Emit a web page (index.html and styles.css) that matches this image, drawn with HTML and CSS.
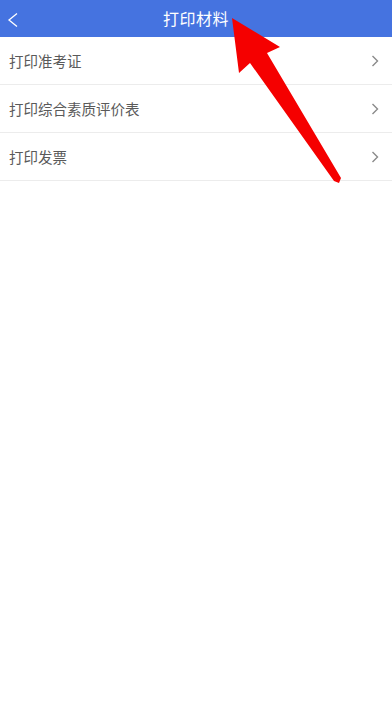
FILE: index.html
```html
<!DOCTYPE html>
<html lang="zh">
<head>
<meta charset="utf-8">
<link rel="stylesheet" href="styles.css">
</head>
<body>
<div class="page">
  <header class="bar">
    <svg class="back" width="14" height="16" viewBox="0 0 14 16"><path d="M11 1.5 L3 8 L11 14.5" fill="none" stroke="#fff" stroke-width="1.3"/></svg>
    <h1 class="title">打印材料</h1>
  </header>
  <ul class="list">
    <li class="row"><span>打印准考证</span><svg class="chev" width="8" height="12" viewBox="0 0 8 12"><path d="M1.5 1 L6.5 6 L1.5 11" fill="none" stroke="#8a8a8a" stroke-width="1.4"/></svg></li>
    <li class="row"><span>打印综合素质评价表</span><svg class="chev" width="8" height="12" viewBox="0 0 8 12"><path d="M1.5 1 L6.5 6 L1.5 11" fill="none" stroke="#8a8a8a" stroke-width="1.4"/></svg></li>
    <li class="row"><span>打印发票</span><svg class="chev" width="8" height="12" viewBox="0 0 8 12"><path d="M1.5 1 L6.5 6 L1.5 11" fill="none" stroke="#8a8a8a" stroke-width="1.4"/></svg></li>
  </ul>
  <svg class="arrow" width="392" height="702" viewBox="0 0 392 702"><polygon points="232,18 280,47 267,53 341,178 339,183 334,181 250,63 239,73" fill="#f50000"/></svg>
</div>
</body>
</html>
```
FILE: styles.css
```css
html, body {
  margin: 0;
  padding: 0;
  background: #fff;
}
.page {
  position: relative;
  width: 392px;
  height: 702px;
  overflow: hidden;
  font-family: "Noto Sans CJK SC", "Noto Sans", sans-serif;
}
.bar {
  height: 37px;
  background: #4573e0;
  display: flex;
  align-items: center;
  justify-content: center;
  position: relative;
}
.back {
  position: absolute;
  left: 6px;
  top: 12px;
}
.title {
  margin: 0;
  color: #fff;
  font-size: 16px;
  font-weight: normal;
  line-height: 37px;
  letter-spacing: 0.5px;
}
.list {
  list-style: none;
  margin: 0;
  padding: 0;
}
.row {
  height: 47px;
  border-bottom: 1px solid #ececec;
  display: flex;
  align-items: center;
  justify-content: space-between;
  padding: 0 13px 0 9px;
  font-size: 14.5px;
  color: #5a5a5a;
}
.arrow {
  position: absolute;
  left: 0;
  top: 0;
  pointer-events: none;
}
```
